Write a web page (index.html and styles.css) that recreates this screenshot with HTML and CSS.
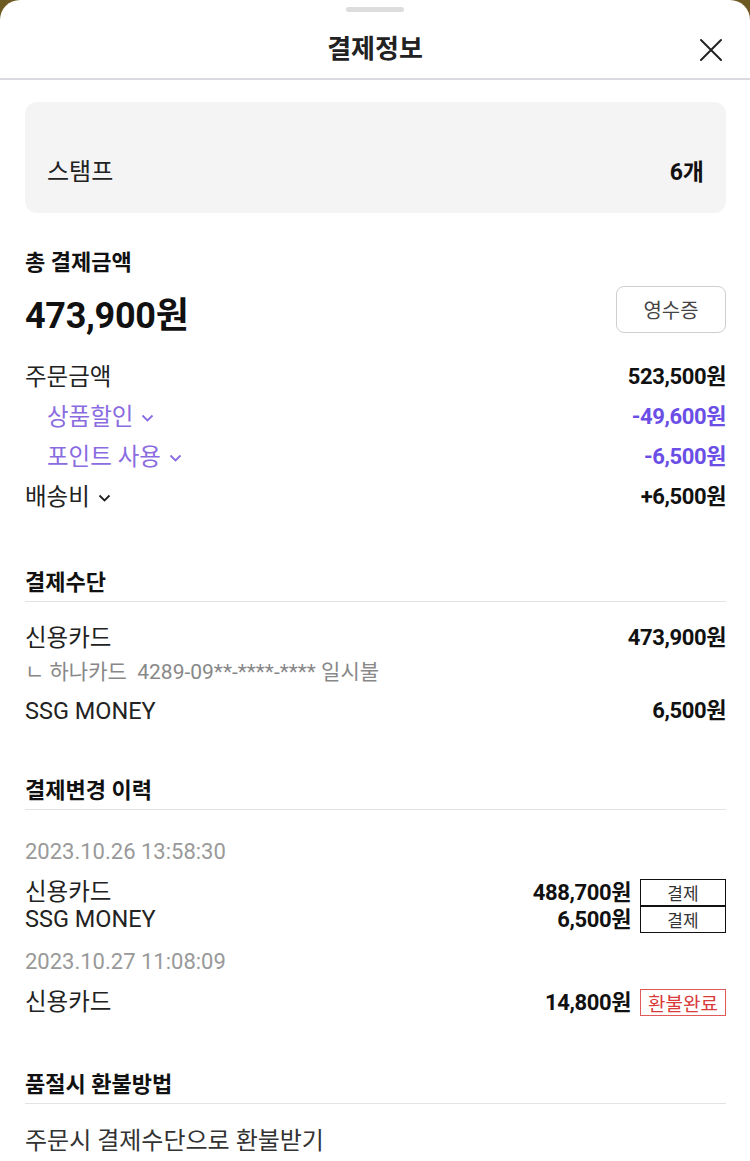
FILE: index.html
```html
<!DOCTYPE html>
<html lang="ko">
<head>
<meta charset="utf-8">
<title>결제정보</title>
<link rel="stylesheet" href="styles.css">
</head>
<body>
<div class="sheet">
  <div class="handle"></div>
  <header class="header">
    <h1 class="title">결제정보</h1>
    <button class="close" aria-label="닫기">
      <svg width="24" height="24" viewBox="0 0 24 24"><path d="M2 2 L22 22 M22 2 L2 22" stroke="#222" stroke-width="2" fill="none" stroke-linecap="round"/></svg>
    </button>
  </header>

  <main class="content">
    <div class="stamp-card">
      <span class="stamp-label">스탬프</span>
      <span class="stamp-value">6개</span>
    </div>

    <section class="total">
      <h2 class="sec-title plain">총 결제금액</h2>
      <div class="total-row">
        <span class="total-amount">473,900원</span>
        <button class="receipt">영수증</button>
      </div>
      <div class="row">
        <span class="label">주문금액</span>
        <span class="value">523,500원</span>
      </div>
      <div class="row sub">
        <span class="label">상품할인 <svg class="chev" width="13" height="9" viewBox="0 0 13 9"><path d="M1.5 1.5 L6.5 6.5 L11.5 1.5" stroke="currentColor" stroke-width="1.8" fill="none"/></svg></span>
        <span class="value">-49,600원</span>
      </div>
      <div class="row sub">
        <span class="label">포인트 사용 <svg class="chev" width="13" height="9" viewBox="0 0 13 9"><path d="M1.5 1.5 L6.5 6.5 L11.5 1.5" stroke="currentColor" stroke-width="1.8" fill="none"/></svg></span>
        <span class="value">-6,500원</span>
      </div>
      <div class="row">
        <span class="label">배송비 <svg class="chev" width="13" height="9" viewBox="0 0 13 9"><path d="M1.5 1.5 L6.5 6.5 L11.5 1.5" stroke="currentColor" stroke-width="1.8" fill="none"/></svg></span>
        <span class="value">+6,500원</span>
      </div>
    </section>

    <section class="section">
      <h2 class="sec-title">결제수단</h2>
      <div class="pay-row first">
        <span class="label">신용카드</span>
        <span class="value">473,900원</span>
      </div>
      <div class="pay-detail">ㄴ 하나카드&nbsp;&nbsp;4289-09**-****-**** 일시불</div>
      <div class="pay-row ssg">
        <span class="label">SSG MONEY</span>
        <span class="value">6,500원</span>
      </div>
    </section>

    <section class="section history">
      <h2 class="sec-title">결제변경 이력</h2>
      <div class="date first">2023.10.26 13:58:30</div>
      <div class="hist-group">
        <div class="hist-row">
          <span class="label">신용카드</span>
          <span class="hist-right"><span class="value">488,700원</span><span class="tag">결제</span></span>
        </div>
        <div class="hist-row">
          <span class="label">SSG MONEY</span>
          <span class="hist-right"><span class="value">6,500원</span><span class="tag">결제</span></span>
        </div>
      </div>
      <div class="date">2023.10.27 11:08:09</div>
      <div class="hist-group">
        <div class="hist-row">
          <span class="label">신용카드</span>
          <span class="hist-right"><span class="value">14,800원</span><span class="tag refund">환불완료</span></span>
        </div>
      </div>
    </section>

    <section class="section refund-sec">
      <h2 class="sec-title">품절시 환불방법</h2>
      <div class="refund-method">주문시 결제수단으로 환불받기</div>
    </section>
  </main>
</div>
</body>
</html>
```

FILE: styles.css
```css
* { box-sizing: border-box; }

html, body {
  margin: 0;
  padding: 0;
}

body {
  background: #6d5a22;
  font-family: Roboto, "Noto Sans CJK KR", sans-serif;
  color: #222;
  width: 750px;
  height: 1161px;
  overflow: hidden;
}

.sheet {
  background: #fff;
  border-radius: 20px 20px 0 0;
  min-height: 1161px;
  padding-top: 7px;
}

.handle {
  width: 58px;
  height: 5px;
  margin: 0 auto;
  background: #dddddd;
  border-radius: 3px;
}

.header {
  height: 68px;
  display: flex;
  align-items: center;
  justify-content: center;
  position: relative;
  border-bottom: 2px solid #d9d9df;
  padding-top: 7px;
}

.title {
  margin: 0;
  font-size: 26px;
  font-weight: 600;
  color: #222;
  line-height: 32px;
}

.close {
  position: absolute;
  right: 27px;
  top: 26px;
  width: 24px;
  height: 24px;
  border: 0;
  padding: 0;
  background: none;
}

.close svg { display: block; }

.content {
  padding: 0 24px 0 25px;
}

.stamp-card {
  margin-top: 22px;
  height: 111px;
  background: #f4f4f4;
  border-radius: 12px;
  display: flex;
  justify-content: space-between;
  align-items: center;
  padding: 24px 22px 0 22px;
}

.stamp-label { color: #222; font-size: 24px; }
.stamp-value { font-weight: 700; font-size: 23px; color: #111; }

.total { margin-top: 36px; }

.sec-title {
  margin: 0;
  font-size: 22px;
  font-weight: 700;
  line-height: 28px;
  color: #111;
  padding-bottom: 4px;
  border-bottom: 1px solid #e3e3e3;
}

.sec-title.plain {
  border-bottom: 0;
  padding-bottom: 0;
}

.total-row {
  margin-top: 9px;
  height: 47px;
  display: flex;
  justify-content: space-between;
  align-items: center;
}

.total-amount {
  font-size: 36px;
  font-weight: 700;
  color: #111;
  letter-spacing: -0.3px;
  position: relative;
  top: 2px;
}

.receipt {
  width: 110px;
  height: 47px;
  border: 1px solid #cfcfcf;
  border-radius: 8px;
  background: #fff;
  font-family: "Noto Sans CJK KR", sans-serif;
  font-size: 20px;
  color: #444;
  padding: 0;
}

.row {
  display: flex;
  justify-content: space-between;
  align-items: center;
  height: 40px;
}

.total-row + .row { margin-top: 24px; }

.label {
  display: inline-flex;
  align-items: center;
  gap: 8px;
  color: #222;
  font-size: 23.5px;
  line-height: 30px;
}

.value {
  font-weight: 700;
  font-size: 22px;
  line-height: 28px;
  color: #111;
  letter-spacing: -0.4px;
}

.row.sub .label {
  padding-left: 22px;
  color: #8a6ce0;
}

.row.sub .value { color: #6a4ee6; }

.chev { margin-top: 2px; }

.section { margin-top: 52px; }
.section.history { margin-top: 49px; }
.section.refund-sec { margin-top: 55px; }

.pay-row {
  display: flex;
  justify-content: space-between;
  align-items: center;
  height: 34px;
}

.pay-row.first { margin-top: 19px; }
.pay-row.ssg { margin-top: 5px; }

.pay-detail {
  height: 34px;
  line-height: 34px;
  font-size: 21px;
  color: #888;
}

.date {
  height: 34px;
  line-height: 34px;
  font-size: 22px;
  color: #999;
  margin-top: 12px;
}

.date.first { margin-top: 25px; }

.hist-group { margin-top: 10px; }

.hist-row {
  display: flex;
  justify-content: space-between;
  align-items: center;
  height: 27px;
}

.hist-row .label,
.hist-row .value {
  line-height: 27px;
}

.hist-right {
  display: flex;
  align-items: center;
  gap: 9px;
}

.tag {
  width: 86px;
  height: 27px;
  border: 1.5px solid #111;
  display: flex;
  align-items: center;
  justify-content: center;
  font-size: 17px;
  line-height: 24px;
  color: #333;
  font-family: "Noto Sans CJK KR", sans-serif;
}

.tag.refund {
  border-color: #e05a5a;
  color: #d93a3a;
  font-size: 19px;
}

.refund-method {
  margin-top: 20px;
  height: 34px;
  line-height: 34px;
  font-size: 24px;
  color: #333;
}
```
